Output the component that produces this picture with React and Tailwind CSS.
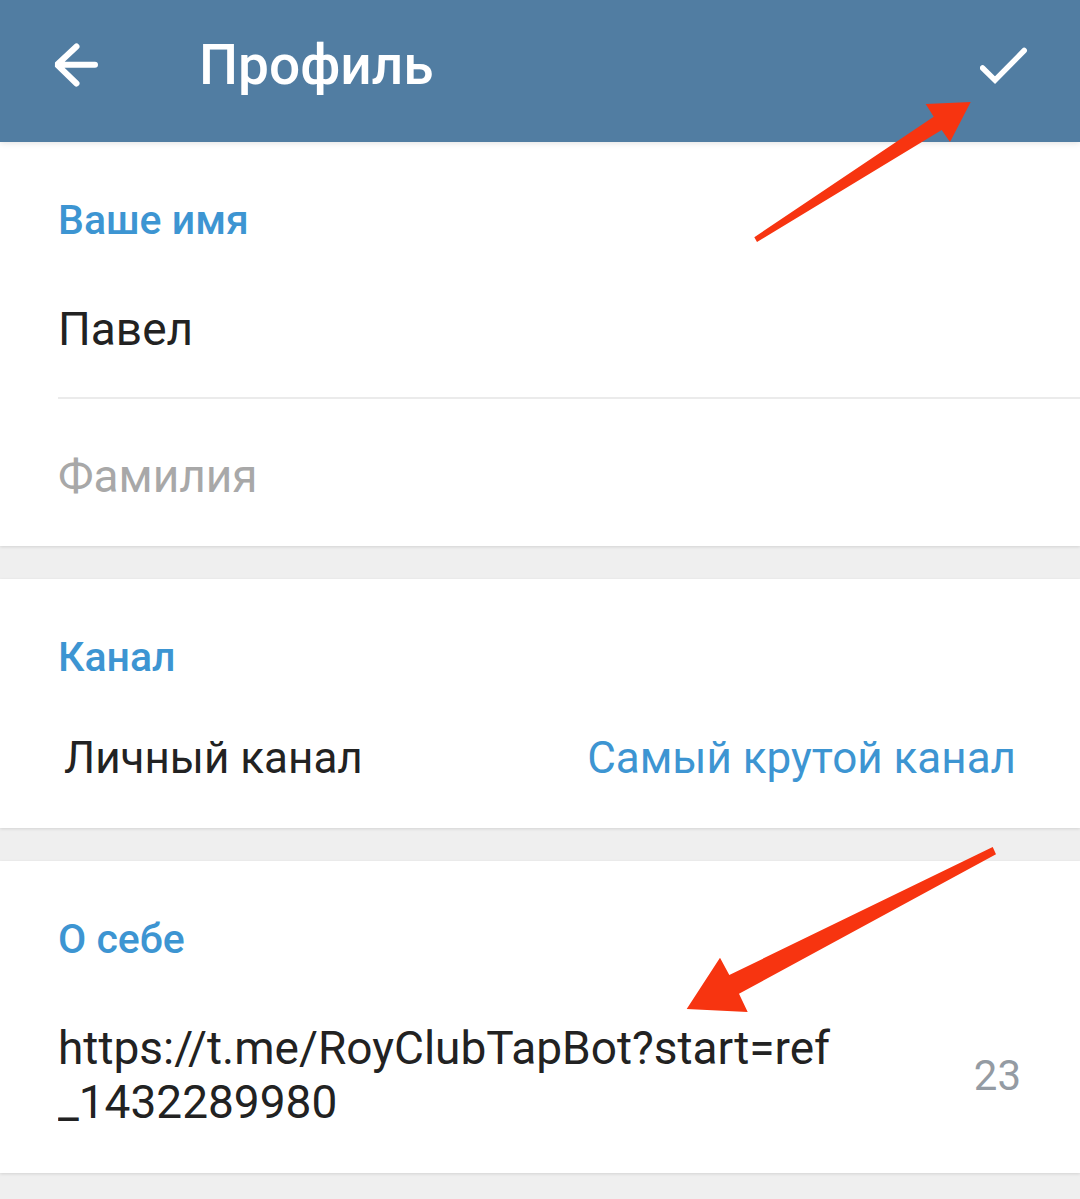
import { useState } from "react";

function BackIcon() {
  return (
    <svg width="48" height="48" viewBox="0 0 48 48" fill="none" stroke="currentColor" strokeWidth="6" strokeLinecap="round" aria-hidden="true">
      <path d="M24.500 5.500 5 23.700 24.500 42.500M6 23.700h37" strokeLinejoin="bevel" />
    </svg>
  );
}

function CheckIcon() {
  return (
    <svg width="48" height="48" viewBox="0 0 48 48" fill="none" stroke="currentColor" strokeWidth="5.500" strokeLinecap="round" aria-hidden="true">
      <path d="M2.600 27 15 39.200 44.200 9.500" />
    </svg>
  );
}

function Heading({ children }) {
  return <h2 className="text-[41px] leading-[48px] font-medium text-[#3d95d2]">{children}</h2>;
}

function Section({ children }) {
  return (
    <section className="relative bg-white pt-[54px] pl-[58px] shadow-[0_1px_3px_rgba(0,0,0,0.12)]">
      {children}
    </section>
  );
}

export default function App() {
  const [first, setFirst] = useState("Павел");
  const [last, setLast] = useState("");
  const [about, setAbout] = useState("https://t.me/RoyClubTapBot?start=ref_1432289980");

  return (
    <div className="min-h-screen bg-[#efefef] font-[Roboto,sans-serif] text-[#222222]">
      <header className="relative z-10 flex items-center bg-[#517da2] pt-[33px] pr-[52px] pb-[45px] pl-[52px] text-white shadow-[0_1px_6px_rgba(0,0,0,0.12)]">
        <button type="button" aria-label="Назад">
          <BackIcon />
        </button>
        <h1 className="ml-[99px] flex-1 text-[55px] leading-[64px] font-medium">Профиль</h1>
        <button type="button" aria-label="Готово">
          <CheckIcon />
        </button>
        <svg className="pointer-events-none absolute top-[100px] right-[100px]" width="230" height="144" viewBox="0 0 230 144" fill="#f73410" aria-hidden="true">
          <path d="M220.700 2 175.700 4 183.700 16.700 4.300 137.300 7 142 191.700 30 200 42Z" />
        </svg>
      </header>

      <main className="flex flex-col gap-[33px]">
        <Section>
          <Heading>Ваше имя</Heading>
          <div className="mt-[16px] border-b-2 border-[#ebebeb]">
            <input
              aria-label="Имя"
              value={first}
              onChange={(e) => setFirst(e.target.value)}
              className="block h-[137px] w-full bg-transparent text-[46px] outline-none"
            />
          </div>
          <input
            aria-label="Фамилия"
            placeholder="Фамилия"
            value={last}
            onChange={(e) => setLast(e.target.value)}
            className="block h-[147px] w-full bg-transparent pt-[6px] text-[46px] outline-none placeholder:text-[#a8a8a8]"
          />
        </Section>

        <Section>
          <Heading>Канал</Heading>
          <button type="button" className="flex h-[147px] w-full items-center justify-between pt-[6px] pr-[64px] pl-[6px] text-left text-[44px]">
            <span>Личный канал</span>
            <span className="text-[#3d95d2]">Самый крутой канал</span>
          </button>
        </Section>

        <Section>
          <Heading>О себе</Heading>
          <div className="mt-[58px] flex items-center pr-[59px] pb-[44px]">
            <textarea
              aria-label="О себе"
              rows={2}
              value={about}
              onChange={(e) => setAbout(e.target.value)}
              className="block min-w-0 flex-1 resize-none overflow-hidden bg-transparent text-[46px] leading-[54px] break-all outline-none"
            />
            <span className="ml-[130px] text-[42px] text-[#949ba3]">23</span>
          </div>
          <svg className="pointer-events-none absolute -top-[16px] right-[80px]" width="316" height="170" viewBox="0 0 316 170" fill="#f73410" aria-hidden="true">
            <path d="M2.700 164 36 112.700 45.300 130 308.700 2 312 9.300 55 148.700 63.700 167Z" />
          </svg>
        </Section>
      </main>
    </div>
  );
}
